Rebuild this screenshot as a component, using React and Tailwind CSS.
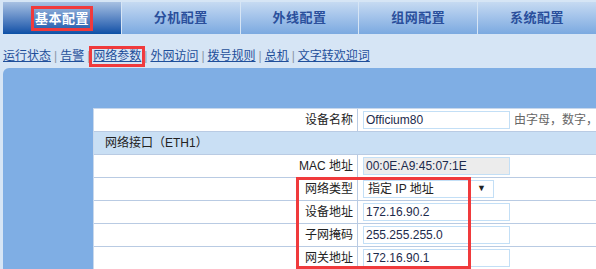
const tabs = ["基本配置", "分机配置", "外线配置", "组网配置", "系统配置"];
const links = ["运行状态", "告警", "网络参数", "外网访问", "拨号规则", "总机", "文字转欢迎词"];

const font = { fontFamily: '"Liberation Sans", "Noto Sans CJK SC", sans-serif' };

function Row({ label, children, className = "" }) {
  return (
    <div className={`flex h-[23px] border-b border-[#b9cbe3] ${className}`}>
      <div className="w-[264px] shrink-0 border-r border-[#b9cbe3] flex items-center justify-end pr-[4px] text-[12px] text-[#222]">
        {label}
      </div>
      <div className="flex items-center pl-[5px] gap-[4px]">{children}</div>
    </div>
  );
}

function Field({ value, gray }) {
  return (
    <div
      className={`w-[147px] h-[18px] border border-[#c3dff6] flex items-center pl-[2px] text-[12px] text-[#1c2a4c] ${
        gray ? "bg-[#ececec]" : "bg-white"
      }`}
    >
      {value}
    </div>
  );
}

export default function App() {
  return (
    <div className="w-[596px] h-[269px] overflow-hidden bg-[#d6e5f5]" style={font}>
      {/* top tabs */}
      <div className="grid grid-cols-5 gap-px pl-[3px] pt-[2px] h-[34px]">
        {tabs.map((t, i) => (
          <div
            key={t}
            className={`flex items-center justify-center text-[13px] font-bold tracking-[0.5px] ${
              i === 0
                ? "bg-gradient-to-b from-[#a7c0e2] to-[#0a50a6] text-white"
                : "bg-gradient-to-b from-[#c6daf2] to-[#7ba9e0] text-[#2a4f9c]"
            }`}
          >
            {i === 0 ? (
              <span className="border-[3px] border-[#f03a3c] px-px leading-[19px]">{t}</span>
            ) : (
              t
            )}
          </div>
        ))}
      </div>

      {/* sub nav */}
      <div className="h-[34px] flex items-end pl-[3px] pb-[4px] text-[12px] leading-[16px]">
        {links.map((l, i) => (
          <span key={l} className="flex items-center">
            {i > 0 && <span className="text-[#8a98a8] px-[3px]">|</span>}
            <span className={i === 2 ? "border-[3px] border-[#f03a3c] px-px -mx-[4px] -my-[3px] leading-[15px]" : ""}>
              <a className="underline text-[#1f4f9a]">{l}</a>
            </span>
            {i === 2 && <span className="w-0" />}
          </span>
        ))}
      </div>

      {/* panel */}
      <div className="ml-[3px] h-[201px] rounded-tl-[6px] bg-[#7faee4] pl-[90px] pt-[40px]">
        <div className="relative bg-white border-l border-t border-[#c8d8ec] h-full">
          <Row label="设备名称">
            <Field value="Officium80" />
            <span className="text-[12px] text-[#666] whitespace-nowrap">由字母，数字，</span>
          </Row>
          <div className="h-[23px] border-b border-[#b9cbe3] bg-[#c9dff4] flex items-center pl-[11px] text-[12px] text-[#222]">
            网络接口（ETH1）
          </div>
          <Row label="MAC 地址">
            <Field value="00:0E:A9:45:07:1E" gray />
          </Row>
          <Row label="网络类型">
            <div className="w-[131px] h-[18px] border border-[#c3dff6] bg-white flex items-center justify-between pl-[4px] pr-[7px] text-[12px] text-[#222]">
              <span>指定 IP 地址</span>
              <span className="text-[9px]">▼</span>
            </div>
          </Row>
          <Row label="设备地址">
            <Field value="172.16.90.2" />
          </Row>
          <Row label="子网掩码">
            <Field value="255.255.255.0" />
          </Row>
          <Row label="网关地址">
            <Field value="172.16.90.1" />
          </Row>
          <div className="absolute left-[202px] top-[68px] w-[175px] h-[92px] border-[3px] border-[#f03a3c]" />
        </div>
      </div>
    </div>
  );
}
